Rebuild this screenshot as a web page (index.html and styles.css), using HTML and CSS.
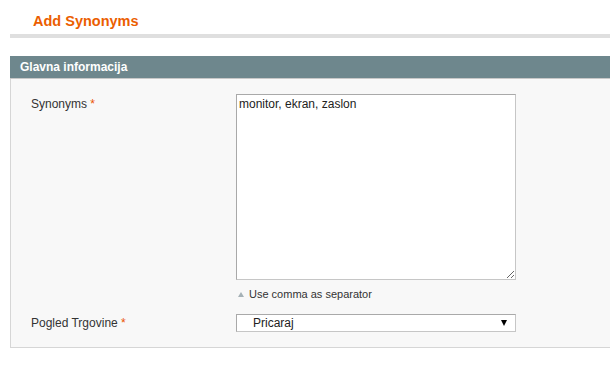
FILE: index.html
```html
<html>
<head>
<meta charset="utf-8">
<link rel="stylesheet" href="styles.css">
</head>
<body>
<div class="Page">
<h1 class="Title">Add Synonyms</h1>
<section class="Box">
<header class="BoxHead">Glavna informacija</header>
<form class="BoxBody">
<div class="Row Top">
<label class="Label">Synonyms <em>*</em></label>
<div class="Field">
<textarea class="Text" name="synonyms">monitor, ekran, zaslon</textarea>
<p class="Note">Use comma as separator</p>
</div>
</div>
<div class="Row Mid">
<label class="Label">Pogled Trgovine <em>*</em></label>
<div class="Field">
<div class="Pick">
<select class="Select" name="store">
<option>Pricaraj</option>
</select>
</div>
</div>
</div>
</form>
</section>
</div>
</body>
</html>
```

FILE: styles.css
```css
body {
    margin: 0;
    background-color: #fff;
    color: #2f2f2f;
    font-family: "Liberation Sans", Arial, sans-serif;
    font-size: 12px;
}
.Page {
    padding-left: 10px;
}
.Title {
    margin: 0 0 18px;
    padding: 13px 0 4px 23px;
    color: #eb5e00;
    font-size: 14.5px;
    font-weight: bold;
    line-height: 17px;
    border-bottom: 4px #dfdfdf solid;
}
.Box {
    margin: 0;
}
.BoxHead {
    padding-left: 10px;
    height: 22px;
    color: #fff;
    font-size: 12px;
    font-weight: bold;
    line-height: 22px;
    background-color: #6e878d;
    border-bottom: 1px #c8c8c8 solid;
}
.BoxBody {
    display: block;
    margin: 0;
    padding: 15px 0 15px;
    background-color: #f8f8f8;
    border-left: 1px #d6d6d6 solid;
    border-bottom: 1px #d6d6d6 solid;
}
.Row {
    display: flex;
}
.Row.Top {
    align-items: flex-start;
    margin-bottom: 13px;
}
.Row.Mid {
    align-items: center;
}
.Label {
    box-sizing: border-box;
    width: 225px;
    padding-left: 20px;
    color: #333;
    line-height: 14px;
}
.Row.Top .Label {
    padding-top: 3px;
}
.Label em {
    color: #eb5202;
    font-style: normal;
}
.Field {
    width: 280px;
}
.Text {
    display: block;
    box-sizing: border-box;
    margin: 0;
    padding: 2px;
    width: 280px;
    height: 186px;
    color: #222;
    font-family: "Liberation Sans", Arial, sans-serif;
    font-size: 12px;
    line-height: 14px;
    background-color: #fff;
    border: 1px solid;
    border-color: #a9a9a9 #c6c6c6 #c6c6c6 #a9a9a9;
    border-radius: 0;
    outline: none;
}
.Note {
    margin: 8px 0 0;
    padding-left: 13px;
    position: relative;
    color: #333;
    font-size: 11px;
    line-height: 13px;
}
.Note:before {
    content: '';
    position: absolute;
    left: 2px;
    top: 4px;
    border-left: 3.5px transparent solid;
    border-right: 3.5px transparent solid;
    border-bottom: 5px #a5b1b6 solid;
}
.Pick {
    position: relative;
}
.Pick:after {
    content: '';
    position: absolute;
    right: 9px;
    top: 6px;
    border-left: 3px transparent solid;
    border-right: 3px transparent solid;
    border-top: 6px #000 solid;
}
.Select {
    display: block;
    box-sizing: border-box;
    margin: 0;
    padding: 0 0 0 16px;
    width: 280px;
    height: 18px;
    color: #222;
    font-family: "Liberation Sans", Arial, sans-serif;
    font-size: 12px;
    line-height: 16px;
    background-color: #fff;
    border: 1px solid;
    border-color: #a9a9a9 #c6c6c6 #c6c6c6 #a9a9a9;
    border-radius: 0;
    -webkit-appearance: none;
    appearance: none;
    outline: none;
}
```
